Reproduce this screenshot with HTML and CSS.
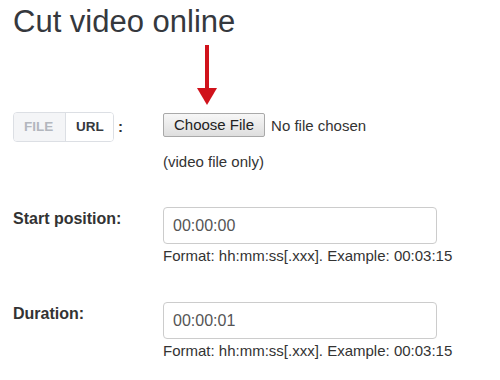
FILE: index.html
```html
<!DOCTYPE html>
<html lang="en">

<head>
    <meta charset="UTF-8">
    <meta name="viewport" content="width=device-width, initial-scale=1.0">
    <title>Cut video online</title>
    <link rel="stylesheet" href="styles.css">
</head>

<body>
    <h1 class="title">Cut video online</h1>

    <form id="cutForm" class="cut-form">
        <div class="row">
            <div class="label"></div>
            <div class="field">
                <svg class="arrow" width="20" height="60" viewBox="0 0 20 60">
                    <rect x="8" y="0" width="4" height="46" fill="#d0121b"></rect>
                    <polygon points="0,43 20,43 10,60" fill="#d0121b"></polygon>
                </svg>
            </div>
        </div>

        <div class="row row-file">
            <div class="label">
                <div class="toggle">
                    <span class="seg seg-off">FILE</span>
                    <span class="seg seg-on">URL</span>
                </div>
                <span class="colon">:</span>
            </div>
            <div class="field">
                <label class="file">
                    <input type="file" id="videoFile" name="videoFile" hidden>
                    <span class="file-btn">Choose File</span>
                    <span class="file-name">No file chosen</span>
                </label>
                <p class="note">(video file only)</p>
            </div>
        </div>

        <div class="row row-time">
            <label class="label" for="start">Start position:</label>
            <div class="field">
                <input type="text" id="start" name="start" value="00:00:00">
                <p class="hint">Format: hh:mm:ss[.xxx]. Example: 00:03:15</p>
            </div>
        </div>

        <div class="row row-time">
            <label class="label" for="duration">Duration:</label>
            <div class="field">
                <input type="text" id="duration" name="duration" value="00:00:01">
                <p class="hint">Format: hh:mm:ss[.xxx]. Example: 00:03:15</p>
            </div>
        </div>
    </form>
</body>

</html>
```

FILE: styles.css
```css
body {
    font-family: "Liberation Sans", Arial, sans-serif;
    font-size: 15px;
    color: #333;
    background: #fff;
    margin: 0;
    padding: 0 13px;
}

.title {
    margin: 0;
    padding-top: 4px;
    font-size: 31px;
    font-weight: normal;
    line-height: 36px;
    color: #35383d;
}

.row {
    display: flex;
    align-items: flex-start;
}

.label {
    width: 150px;
    flex-shrink: 0;
    font-size: 16px;
    font-weight: bold;
    line-height: 20px;
}

.field {
    flex: 1;
}

.arrow {
    display: block;
    margin: 5px 0 7px 34px;
}

.row-file .label {
    display: flex;
    align-items: center;
}

.toggle {
    display: flex;
    height: 28px;
    border: 1px solid #dcdfe4;
    border-radius: 4px;
    overflow: hidden;
}

.seg {
    display: flex;
    align-items: center;
    padding: 0 10px;
    font-size: 13.5px;
    font-weight: bold;
}

.seg-off {
    width: 31px;
    background: #f4f5f7;
    color: #b3b7be;
    border-right: 1px solid #dcdfe4;
}

.seg-on {
    width: 27px;
    background: #fff;
    color: #35383d;
}

.colon {
    margin-left: 4px;
    font-size: 15px;
}

.file {
    display: flex;
    align-items: center;
    margin-top: 1px;
}

.file-btn {
    box-sizing: border-box;
    height: 24px;
    padding: 0 10px;
    line-height: 22px;
    border: 1px solid #a9a9a9;
    border-radius: 2px;
    background: linear-gradient(#f7f7f7, #dedede);
    color: #222;
}

.file-name {
    margin-left: 6px;
}

.note {
    margin: 16px 0 0;
    line-height: 18px;
}

.row-file + .row-time {
    margin-top: 36px;
}

.row-time + .row-time {
    margin-top: 37px;
}

.row-time .label {
    padding-top: 2px;
}

input[type="text"] {
    display: block;
    box-sizing: border-box;
    width: 274px;
    height: 37px;
    padding: 0 9px;
    border: 1px solid #ccc;
    border-radius: 4px;
    font-family: "Liberation Sans", Arial, sans-serif;
    font-size: 16px;
    color: #555;
}

.hint {
    margin: 3px 0 0;
    line-height: 18px;
}
```
